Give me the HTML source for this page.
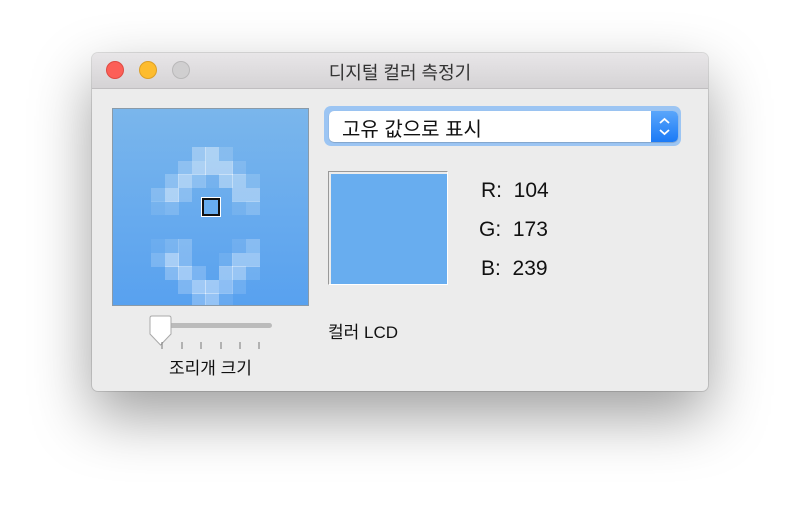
<!DOCTYPE html>
<html><head><meta charset="utf-8"><style>
body{margin:0;width:800px;height:523px;background:#fff;position:relative;overflow:hidden;font-family:"Liberation Sans","Noto Sans CJK KR",sans-serif;}
.win{position:absolute;left:92px;top:53px;width:616px;height:338px;background:#ececec;border-radius:6px;box-shadow:0 25px 60px rgba(0,0,0,.38),0 0 0 1px rgba(0,0,0,.12);overflow:hidden}
.tb{position:absolute;left:0;top:0;width:616px;height:35px;background:linear-gradient(#e8e6e8,#d5d3d5);border-bottom:1px solid #c0bec0;}
.tl{position:absolute;top:8px;width:18px;height:18px;border-radius:50%;box-sizing:border-box}
.title{position:absolute;left:0;right:0;top:6px;text-align:center;font-size:18px;color:#333}
.mag{position:absolute;left:112px;top:108px;width:195px;height:196px;border:1px solid #8a9aa8;background:linear-gradient(#7ab6ec,#58a1ef);overflow:hidden}
.p{position:absolute;width:14px;height:14px;background:#fff}
.txt{position:absolute;font-size:17px;color:#111}
</style></head><body>
<div class="win">
<div class="tb">
<div class="tl" style="left:14px;background:#fc5f57;border:1px solid #de4a42"></div>
<div class="tl" style="left:47px;background:#fdbc2e;border:1px solid #dc9f26"></div>
<div class="tl" style="left:80px;background:#d0cfd0;border:1px solid #b9b8b9"></div>
<div class="title">디지털 컬러 측정기</div>
</div>
</div>
<div class="mag" id="mag"></div>
<div style="position:absolute;left:202px;top:198px;width:14px;height:14px;border:2px solid #111;outline:1px solid #fff;background:#68adef"></div>
<div style="position:absolute;left:324px;top:106px;width:357px;height:40px;border-radius:7px;background:#9cc5f3"></div>
<div style="position:absolute;left:329px;top:111px;width:349px;height:31px;border-radius:5px;background:#fff;box-shadow:0 0.5px 1px rgba(0,0,0,.3)"></div>
<div class="txt" style="left:342px;top:113px;font-size:20px">고유 값으로 표시</div>
<div style="position:absolute;left:651px;top:111px;width:27px;height:31px;border-radius:0 5px 5px 0;background:linear-gradient(#5aa6fb,#1b7af6)"></div>
<svg style="position:absolute;left:651px;top:111px" width="27" height="31"><path d="M9 12 L13.5 8 L18 12 M9 19 L13.5 23 L18 19" stroke="#fff" stroke-width="1.8" fill="none"/></svg>
<div style="position:absolute;left:328px;top:171px;width:120px;height:114px;border:1px solid #999;border-right-color:#fff;border-bottom-color:#fff;box-sizing:border-box"></div>
<div style="position:absolute;left:331px;top:174px;width:116px;height:110px;background:#68adef"></div>
<div class="txt" style="left:481px;top:179px;font-size:21px">R:&nbsp; 104</div>
<div class="txt" style="left:479px;top:218px;font-size:21px">G:&nbsp; 173</div>
<div class="txt" style="left:481px;top:257px;font-size:21px">B:&nbsp; 239</div>
<div class="txt" style="left:328px;top:318px;font-size:17px">컬러 LCD</div>
<div style="position:absolute;left:160px;top:323px;width:112px;height:5px;border-radius:3px;background:#bbb"></div>
<svg style="position:absolute;left:147px;top:315px" width="30" height="32"><path d="M3 3 Q3 1 5 1 L22 1 Q24 1 24 3 L24 19 L13.5 30 L3 19 Z" fill="#fff" stroke="#aaa" stroke-width="1"/></svg>
<svg style="position:absolute;left:150px;top:340px" width="130" height="12"><g stroke="#777" stroke-width="1"><path d="M12 2v7M32 2v7M51 2v7M71 2v7M90 2v7M109 2v7"/></g></svg>
<div class="txt" style="left:169px;top:354px;font-size:17px">조리개 크기</div>
<script>
var cols=[151,164.5,178,191.5,205,218.5,232,245.5];
var d=[[147,[[3,.5],[4,.7],[5,.25]]],[160.5,[[2,.35],[3,.7],[4,.7],[5,.7],[6,.2]]],[174,[[1,.35],[2,.7],[3,.35],[4,.1],[5,.6],[6,.6],[7,.25]]],[187.5,[[0,.3],[1,.75],[2,.35],[6,.6],[7,.6]]],[201,[[0,.15],[1,.25],[6,.15],[7,.3]]],
[239,[[0,.1],[1,.25],[2,.35],[6,.15],[7,.4]]],[252.5,[[0,.3],[1,.75],[2,.35],[5,.15],[6,.6],[7,.6]]],[266,[[1,.4],[2,.7],[3,.3],[5,.6],[6,.6],[7,.2]]],[279.5,[[2,.35],[3,.7],[4,.7],[5,.5],[6,.2]]],[293,[[3,.4],[4,.6],[5,.15]]]];
var m=document.getElementById('mag'),h='';
d.forEach(function(r){r[1].forEach(function(c){h+='<div class="p" style="left:'+(cols[c[0]]-113)+'px;top:'+(r[0]-109)+'px;opacity:'+(c[1]*0.6)+'"></div>';});});
m.innerHTML=h;
</script>
</body></html>
